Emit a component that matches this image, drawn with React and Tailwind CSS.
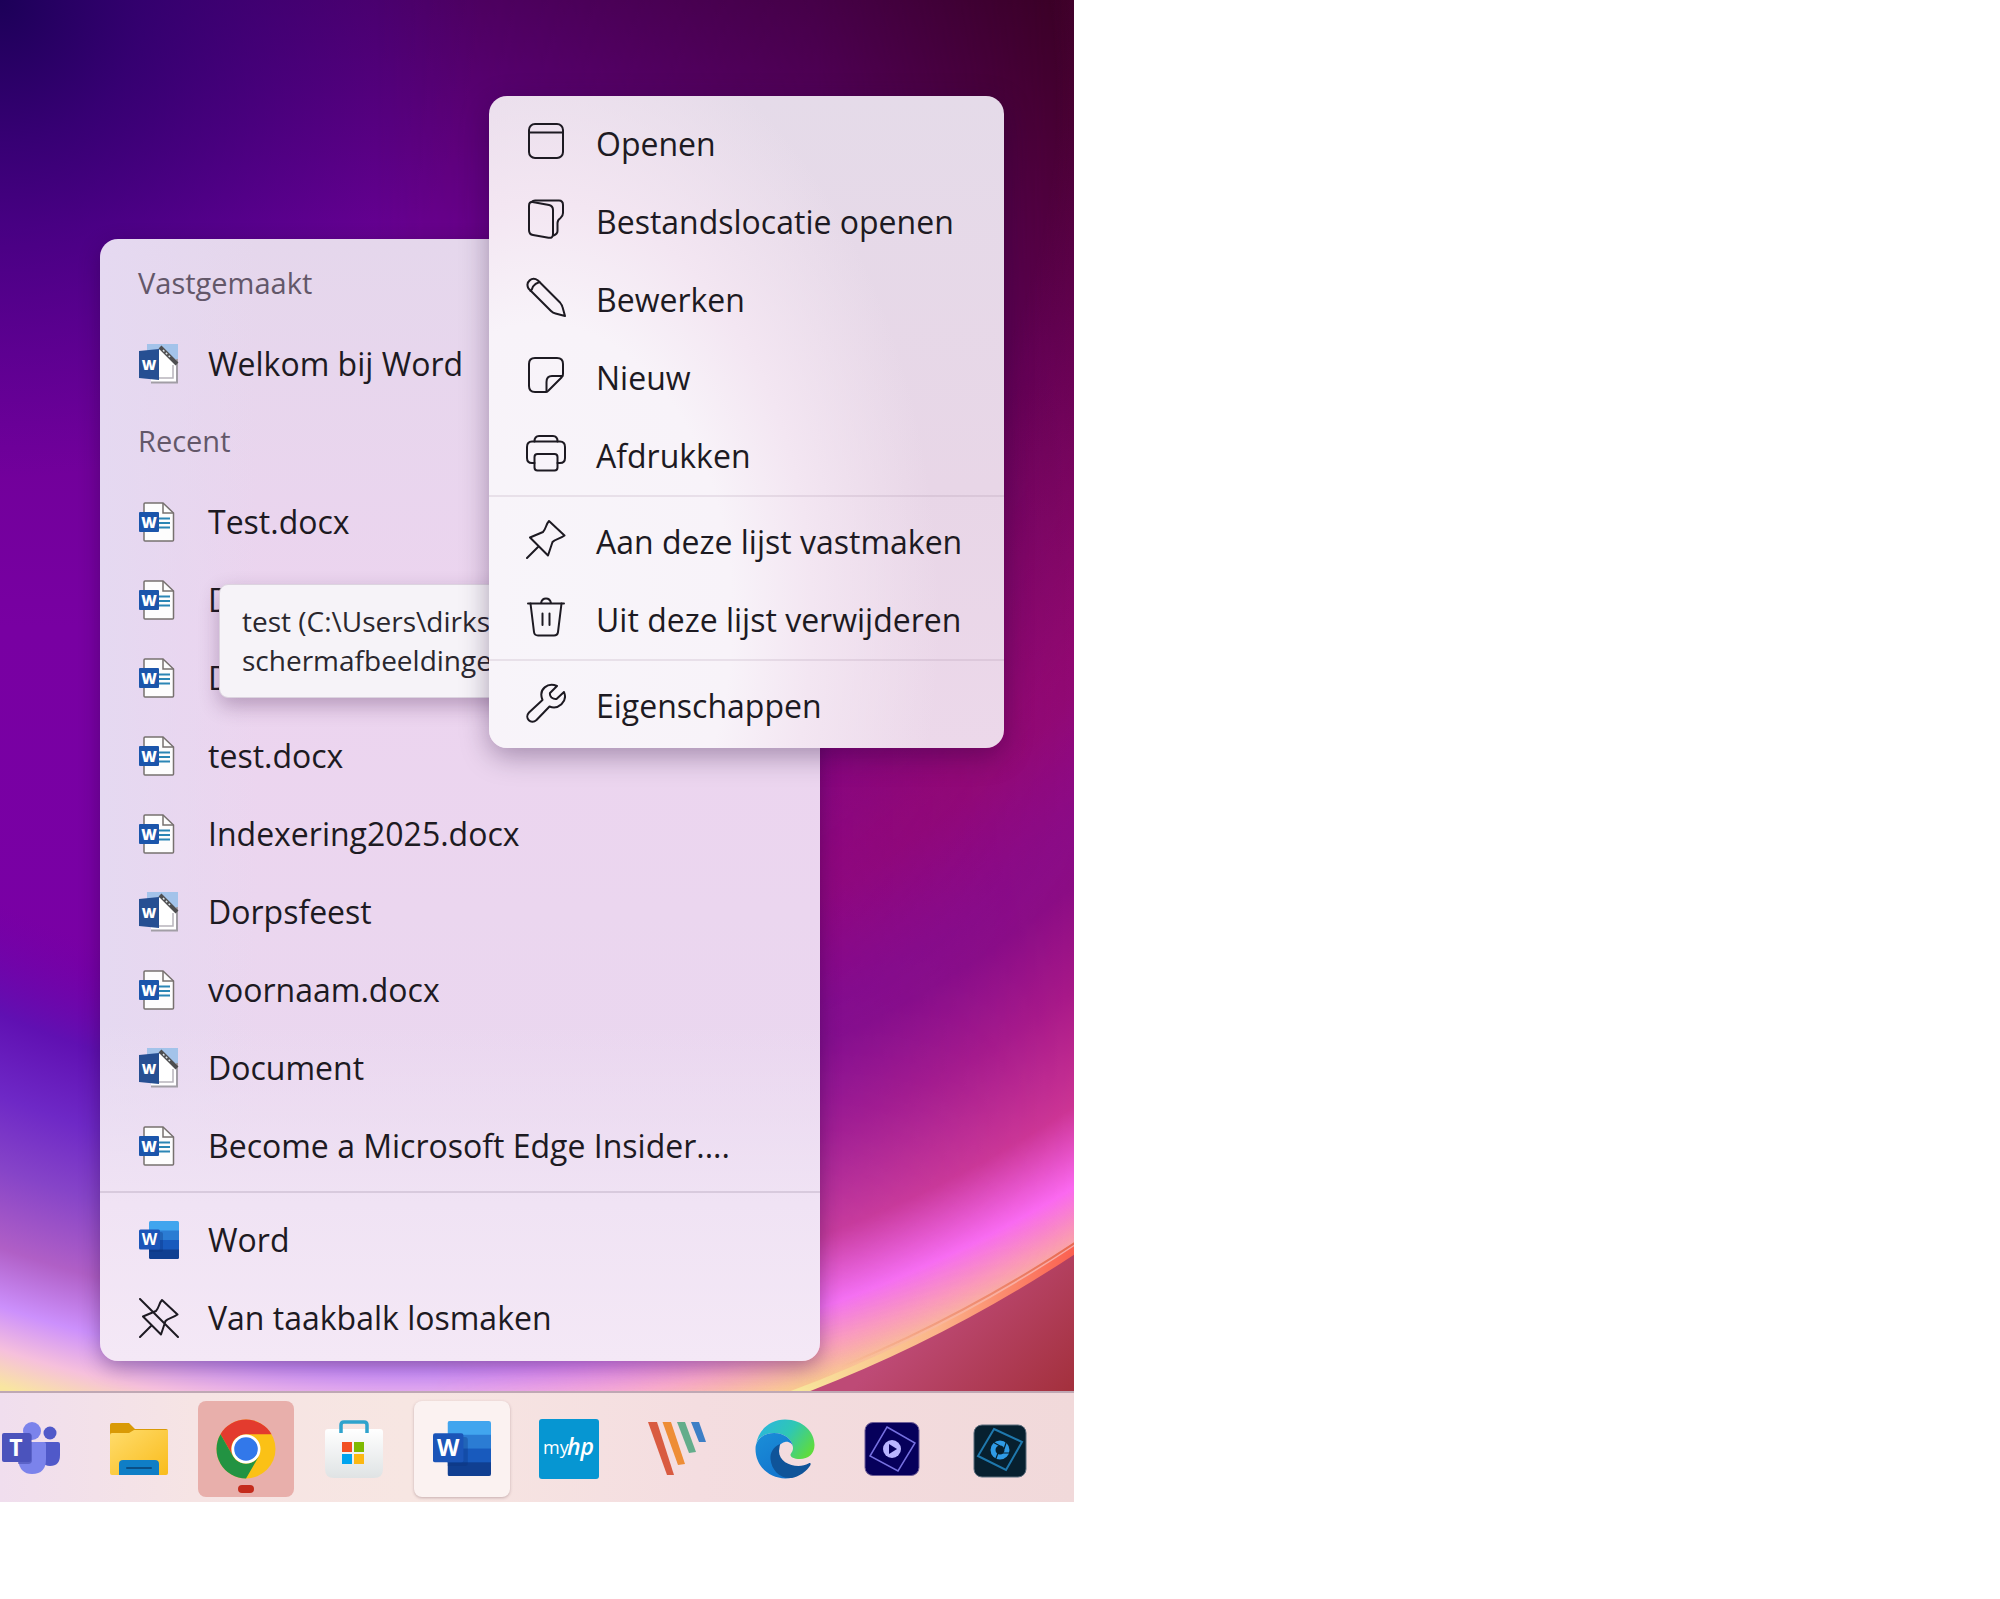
const pinPath = 'M23 2 L38.5 16.5 C34 20 29 20 26.5 23 L22 36.5 L4 18.5 L17 13 C20 10 20 5 23 2 Z M1 39 L12.5 27.5';

const glyphs = {
  window: (
    <>
      <rect x="3" y="3" width="34" height="34" rx="6" />
      <path d="M3 11.5 H37" />
    </>
  ),
  folder: (
    <>
      <path d="M3 7 Q3 2.5 6.5 3 L23 6 Q27 7 27 11 V35 Q27 39.5 22.5 38.7 L7 36 Q3 35.5 3 31 Z" />
      <path d="M5.5 3 Q7 1.5 9 1.5 H33 Q37 1.5 37 6 V14 Q37 17 34.5 19 Q31.5 21 31.5 24 V32 Q31.5 35 27.5 36.5" />
    </>
  ),
  pencil: (
    <>
      <path d="M2.5 11.5 C-1 5 6 -1 12 3.5 L34 25.5 Q36 28 36.5 30 L39 39 L29.5 36.5 Q27 36 25 34 Z" />
      <path d="M4.5 14 Q6 13 7 9.5 Q9 6.5 13.5 5" />
    </>
  ),
  note: (
    <>
      <path d="M20 37 H9 Q3 37 3 31 V9 Q3 3 9 3 H31 Q37 3 37 9 V19 Q37 21 35.5 22.5 L22.5 35.5 Q21.5 37 20 37 Z" />
      <path d="M20.5 36.5 V27 Q20.5 21 26 21 H36.5" />
    </>
  ),
  printer: (
    <>
      <path d="M8.5 30 H6 Q1 30 1 25 V14 Q1 8.5 6 8.5 H34 Q39 8.5 39 14 V25 Q39 30 34 30 H31.5" />
      <path d="M8.5 8.5 Q8.5 3 13 3 H27 Q31.5 3 31.5 8.5" />
      <rect x="8.5" y="21" width="23" height="16.5" rx="3" />
    </>
  ),
  pin: <path d={pinPath} />,
  unpin: <path d={`${pinPath} M1 1 L39 39`} />,
  trash: (
    <>
      <path d="M2 6.5 H38 M15 6 Q16 1.5 20 1.5 Q24 1.5 25 6" />
      <path d="M4.5 6.5 L8 35 Q8.5 38.5 12 38.5 H28 Q31.5 38.5 32 35 L35.5 6.5 M16.5 16.5 V28 M23.5 16.5 V28" />
    </>
  ),
  wrench: (
    <path d="M31 3 C22 -1 12 6 16.5 17 L3 29.5 C-2 35 5 42 10.5 37 L23.5 23.5 C32 27 42 19 38 9 L30.5 16 Q28 16.5 25.5 14.5 Q23.5 12.5 24 10 Z" />
  ),
};

function Glyph({ name }) {
  return (
    <svg viewBox="0 0 40 40" className="size-10 shrink-0" fill="none" stroke="#1d1a22" strokeWidth="2" strokeLinejoin="round" strokeLinecap="round">
      {glyphs[name]}
    </svg>
  );
}

function DocIcon() {
  return (
    <svg viewBox="0 0 40 40" className="size-10 shrink-0">
      <path d="M6 1 H24 L34.5 11 V38 Q34.5 39 33.5 39 H6 Q5 39 5 38 V2 Q5 1 6 1 Z" fill="#fdfdfd" stroke="#77716f" strokeWidth="1.5" />
      <path d="M24 1 V11 H34.5" fill="none" stroke="#77716f" strokeWidth="1.5" />
      <path d="M20 16.5 H31 M20 21 H31 M20 25.5 H31" stroke="#2b86b5" strokeWidth="1.8" />
      <rect x="0" y="10" width="20" height="20" rx="1" fill="#1b55ab" />
      <text x="10" y="25.5" textAnchor="middle" fontSize="15" fontWeight="800" fill="#fff" fontFamily="Open Sans">W</text>
    </svg>
  );
}

function TemplateIcon() {
  return (
    <svg viewBox="0 0 40 40" className="size-10 shrink-0">
      <rect x="8" y="0" width="31" height="18" fill="#a3c3ea" />
      <path d="M12 6 H24 L39 18 V39 H12 Z" fill="#fff" />
      <path d="M38 15 V39 M12 38.5 H39" stroke="#a29ea6" strokeWidth="2" />
      <path d="M34 21 V34 H20" stroke="#b8b4bc" strokeWidth="1.5" fill="none" />
      <path d="M0 7 L20 5 V36 L0 34 Z" fill="#264f92" />
      <path d="M21 3 L38 20" stroke="#4e4e50" strokeWidth="4" />
      <path d="M24 6 L32 14" stroke="#dfe6ea" strokeWidth="1.5" strokeDasharray="2 2" />
      <text x="10" y="25.5" textAnchor="middle" fontSize="14" fontWeight="800" fill="#fff" fontFamily="Open Sans">W</text>
    </svg>
  );
}

function WordIcon({ className }) {
  return (
    <svg viewBox="0 0 40 38" className={className}>
      <clipPath id="word-sheet">
        <rect x="10" y="0" width="30" height="38" rx="1.5" />
      </clipPath>
      <g clipPath="url(#word-sheet)">
        <rect x="10" y="0" width="30" height="10" fill="#41a5ee" />
        <rect x="10" y="9.5" width="30" height="10" fill="#2b7cd3" />
        <rect x="10" y="19" width="30" height="10" fill="#185abd" />
        <rect x="10" y="28.5" width="30" height="10" fill="#103f91" />
      </g>
      <path d="M10 11 H22 Q24 11 24 13 V29 Q24 31 22 31 H10 Z" fill="#0a2f78" opacity="0.3" />
      <rect x="0" y="8.5" width="21" height="20" rx="1.5" fill="#1b55b8" />
      <text x="10.5" y="24" textAnchor="middle" fontSize="16" fontWeight="700" fill="#fff" fontFamily="Open Sans">W</text>
    </svg>
  );
}

function TeamsIcon() {
  return (
    <svg viewBox="0 0 60 54" className="w-15 shrink-0">
      <circle cx="49" cy="11" r="6.5" fill="#5059c9" />
      <path d="M40 20 H57 Q59 20 59 22 V33 Q59 44 49 44 Q44 44 41 40 Z" fill="#5059c9" />
      <circle cx="31" cy="9" r="9" fill="#7b83eb" />
      <path d="M19 20 H43 Q45 20 45 22 V37 Q45 52 31 52 Q19 52 17 38 Z" fill="#7b83eb" />
      <path d="M19 12 H29 Q31 12 31 14 V38 Q31 42 27 42 H17 Z" fill="#3b43a5" opacity="0.5" />
      <rect x="1" y="11" width="29" height="29" rx="2" fill="#4b53bc" />
      <text x="15" y="34" textAnchor="middle" fontSize="23" fontWeight="700" fill="#fff" fontFamily="Open Sans">T</text>
    </svg>
  );
}

function ExplorerIcon() {
  return (
    <svg viewBox="0 0 58 52" className="w-[58px] shrink-0">
      <defs>
        <linearGradient id="folder-front" x1="0" y1="0" x2="1" y2="1">
          <stop offset="0" stopColor="#ffdc6c" />
          <stop offset="1" stopColor="#f9bc1c" />
        </linearGradient>
      </defs>
      <path d="M2 0 H19 L25 6 H56 Q58 6 58 8 V20 H0 V2 Q0 0 2 0 Z" fill="#d99a06" />
      <path d="M0 12 Q0 10 2 10 H19 L24 7 H58 V50 Q58 52 56 52 H2 Q0 52 0 50 Z" fill="url(#folder-front)" />
      <path d="M9 52 V41 Q9 37 13 37 H45 Q49 37 49 41 V52 Z" fill="#0f7ec6" />
      <path d="M17 45 H41" stroke="#0a4f86" strokeWidth="2" strokeLinecap="round" />
    </svg>
  );
}

function ChromeIcon() {
  return (
    <svg viewBox="0 0 60 60" className="size-15 shrink-0">
      <circle cx="30" cy="30" r="29.5" fill="#fbc116" />
      <path d="M4.5 15.2 A29.5 29.5 0 0 1 55.5 15.2 H30 A14.8 14.8 0 0 0 17.2 37.4 Z" fill="#e33b2e" />
      <path d="M4.5 15.2 L17.2 37.4 A14.8 14.8 0 0 0 42.8 37.4 L30 59.5 A29.5 29.5 0 0 1 4.5 15.2 Z" fill="#229342" />
      <circle cx="30" cy="30" r="14.5" fill="#fff" />
      <circle cx="30" cy="30" r="11.8" fill="#3278ea" />
    </svg>
  );
}

function StoreIcon() {
  return (
    <svg viewBox="0 0 58 58" className="size-[58px] shrink-0">
      <defs>
        <linearGradient id="store-bag" x1="0" y1="0" x2="0" y2="1">
          <stop offset="0" stopColor="#fff" />
          <stop offset="1" stopColor="#dfe3e4" />
        </linearGradient>
      </defs>
      <path d="M0 12 Q0 9 3 9 H55 Q58 9 58 12 V49 Q58 58 49 58 H9 Q0 58 0 49 Z" fill="url(#store-bag)" />
      <path d="M16 13 V5 Q16 2 19 2 H39 Q42 2 42 5 V13" fill="none" stroke="#2fa3cd" strokeWidth="3.5" />
      <rect x="17" y="22" width="10" height="10" fill="#f25022" />
      <rect x="29" y="22" width="10" height="10" fill="#7fba00" />
      <rect x="17" y="34" width="10" height="10" fill="#00a4ef" />
      <rect x="29" y="34" width="10" height="10" fill="#fcb813" />
    </svg>
  );
}

function MyHpIcon() {
  return (
    <svg viewBox="0 0 60 60" className="size-15 shrink-0">
      <rect width="60" height="60" rx="3" fill="#0696d2" />
      <text x="4" y="35" fontSize="18" fill="#fff" fontFamily="Open Sans">my</text>
      <text x="28" y="36" fontSize="23" fontStyle="italic" fontWeight="600" fill="#fff" fontFamily="Open Sans">hp</text>
    </svg>
  );
}

function StripesIcon() {
  return (
    <svg viewBox="0 0 58 54" className="w-[58px] shrink-0">
      <path d="M0 0 H9 L26 53 H19 Z" fill="#d95b41" />
      <path d="M14.5 0 H23 L37 42 L30 43 Z" fill="#ee8d36" />
      <path d="M29 0 H37 L48 30 L41 31 Z" fill="#64ad8b" />
      <path d="M43 0 H51 L58 20 H51 Z" fill="#3d7fc6" />
    </svg>
  );
}

function EdgeIcon() {
  return (
    <svg viewBox="0 0 60 60" className="size-15 shrink-0">
      <defs>
        <linearGradient id="edge-top" x1="0" y1="0.2" x2="1" y2="0.7">
          <stop offset="0" stopColor="#2bb5e0" />
          <stop offset="0.5" stopColor="#2fc7b4" />
          <stop offset="1" stopColor="#5fdc3c" />
        </linearGradient>
        <linearGradient id="edge-left" x1="0" y1="0" x2="0.6" y2="1">
          <stop offset="0" stopColor="#1b8fd8" />
          <stop offset="1" stopColor="#1274cd" />
        </linearGradient>
      </defs>
      <path d="M1 26 C3 11 15 0.5 30 0.5 C48 0.5 59.5 13 59.5 26 C59.5 35 53 40 45 40 C39 40 35.5 38 35.5 36 C35.5 34 38 33 38 29 C38 21 30 14 19 14 C9 14 2 20 1 26 Z" fill="url(#edge-top)" />
      <path d="M0.5 30 C0.5 21 8 14 19 14 C30 14 38 21 38 29 C38 24 33 22 30 23 C25 24 22 29 22 34 C22 46 32 52 40 52 C44 52 40 57 38 58.5 C19 63 0.5 50 0.5 30 Z" fill="url(#edge-left)" />
      <path d="M25 25 C18 28 15 34 15.5 40 C16.5 51 25 60 36 59 C44 58 52 52 55.5 46 C56 44 55 43.5 53.5 44.5 C44 50 24 46 24 32 Z" fill="#0f5499" />
    </svg>
  );
}

function PremiereIcon() {
  return (
    <svg viewBox="0 0 56 54" className="w-14 shrink-0">
      <rect x="1" y="0.5" width="54" height="53" rx="8" fill="#06005b" stroke="#6f5f98" />
      <path d="M23 5 L51 21 L34 49 L6 34 Z" fill="none" stroke="#7670e0" strokeWidth="1.5" />
      <circle cx="28" cy="27" r="9" fill="#b9b5ff" />
      <path d="M25 22 L33 27 L25 32 Z" fill="#06005b" />
    </svg>
  );
}

function PhotoshopIcon() {
  return (
    <svg viewBox="0 0 54 54" className="mt-1 w-[54px] shrink-0">
      <rect x="1" y="1" width="52" height="52" rx="8" fill="#07202f" stroke="#5a6c7c" />
      <path d="M21 5 L49 18 L33 46 L5 32 Z" fill="none" stroke="#1f78ad" strokeWidth="2" />
      <circle cx="27" cy="26" r="7" fill="none" stroke="#2f9be6" strokeWidth="5" />
      <path d="M27 22 L18 17 M31 25 L34 16 M29 29 L38 29 M25 29 L22 37" stroke="#07202f" strokeWidth="1.2" />
    </svg>
  );
}

const recent = [
  { name: 'Test.docx', Icon: DocIcon },
  { name: 'D', Icon: DocIcon },
  { name: 'D', Icon: DocIcon },
  { name: 'test.docx', Icon: DocIcon },
  { name: 'Indexering2025.docx', Icon: DocIcon },
  { name: 'Dorpsfeest', Icon: TemplateIcon },
  { name: 'voornaam.docx', Icon: DocIcon },
  { name: 'Document', Icon: TemplateIcon },
  { name: 'Become a Microsoft Edge Insider....', Icon: DocIcon },
];

const menuGroups = [
  [
    { label: 'Openen', icon: 'window' },
    { label: 'Bestandslocatie openen', icon: 'folder' },
    { label: 'Bewerken', icon: 'pencil' },
    { label: 'Nieuw', icon: 'note' },
    { label: 'Afdrukken', icon: 'printer' },
  ],
  [
    { label: 'Aan deze lijst vastmaken', icon: 'pin' },
    { label: 'Uit deze lijst verwijderen', icon: 'trash' },
  ],
  [{ label: 'Eigenschappen', icon: 'wrench' }],
];

function Wallpaper() {
  return (
    <svg viewBox="0 0 1074 1392" preserveAspectRatio="none" className="absolute inset-0 size-full" aria-hidden="true">
      <defs>
        <linearGradient id="wp-base" x1="0" y1="0" x2="0" y2="1">
          <stop offset="0" stopColor="#500068" />
          <stop offset="0.16" stopColor="#680090" />
          <stop offset="0.45" stopColor="#7800a2" />
          <stop offset="1" stopColor="#7a00a8" />
        </linearGradient>
        <radialGradient id="wp-blue" gradientUnits="userSpaceOnUse" cx="0" cy="0" r="480">
          <stop offset="0" stopColor="#1c0058" />
          <stop offset="0.3" stopColor="#2a0070" stopOpacity="0.75" />
          <stop offset="1" stopColor="#3a0090" stopOpacity="0" />
        </radialGradient>
        <linearGradient id="wp-side" x1="0" y1="0" x2="0" y2="1">
          <stop offset="0" stopColor="#3a0024" />
          <stop offset="0.25" stopColor="#5c0048" />
          <stop offset="0.55" stopColor="#880c5c" />
          <stop offset="1" stopColor="#900c78" />
        </linearGradient>
        <linearGradient id="wp-fade" x1="0" y1="0" x2="1" y2="0">
          <stop offset="0.35" stopColor="#000" />
          <stop offset="0.76" stopColor="#777" />
          <stop offset="1" stopColor="#fff" />
        </linearGradient>
        <linearGradient id="wp-fade-glow" x1="0" y1="0" x2="1" y2="0">
          <stop offset="0.4" stopColor="#000" />
          <stop offset="0.76" stopColor="#ccc" />
          <stop offset="1" stopColor="#fff" />
        </linearGradient>
        <mask id="wp-right">
          <rect width="1074" height="1392" fill="url(#wp-fade)" />
        </mask>
        <mask id="wp-right-glow">
          <rect width="1074" height="1392" fill="url(#wp-fade-glow)" />
        </mask>
        <radialGradient id="wp-glow" gradientUnits="userSpaceOnUse" cx="403" cy="100" r="1360">
          <stop offset="0.66" stopColor="#7000a8" stopOpacity="0" />
          <stop offset="0.735" stopColor="#6010b2" />
          <stop offset="0.79" stopColor="#6e28c6" />
          <stop offset="0.84" stopColor="#8644c8" />
          <stop offset="0.895" stopColor="#b05fc6" />
          <stop offset="0.936" stopColor="#cc90fc" />
          <stop offset="0.966" stopColor="#f6c0dc" />
          <stop offset="0.992" stopColor="#f9e6a0" />
        </radialGradient>
        <radialGradient id="wp-glow-right" gradientUnits="userSpaceOnUse" cx="403" cy="100" r="1360">
          <stop offset="0.48" stopColor="#920880" stopOpacity="0" />
          <stop offset="0.64" stopColor="#98087c" stopOpacity="0.7" />
          <stop offset="0.76" stopColor="#8c0c84" />
          <stop offset="0.82" stopColor="#a81888" />
          <stop offset="0.89" stopColor="#cc3494" />
          <stop offset="0.94" stopColor="#fb68f0" />
          <stop offset="0.966" stopColor="#fb88b0" stopOpacity="0.8" />
          <stop offset="0.99" stopColor="#fa9a78" stopOpacity="0.5" />
        </radialGradient>
        <linearGradient id="wp-outer" gradientUnits="userSpaceOnUse" x1="960" y1="1280" x2="1074" y2="1392">
          <stop offset="0" stopColor="#be4a76" />
          <stop offset="1" stopColor="#a3303c" />
        </linearGradient>
        <linearGradient id="wp-rim" gradientUnits="userSpaceOnUse" x1="800" y1="0" x2="1074" y2="0">
          <stop offset="0" stopColor="#f8e69c" />
          <stop offset="0.5" stopColor="#fbb48a" />
          <stop offset="1" stopColor="#fb6050" />
        </linearGradient>
        <linearGradient id="wp-rim-line" gradientUnits="userSpaceOnUse" x1="840" y1="0" x2="1074" y2="0">
          <stop offset="0" stopColor="#e0702c" stopOpacity="0" />
          <stop offset="1" stopColor="#e0502c" stopOpacity="0.7" />
        </linearGradient>
      </defs>
      <rect width="1074" height="1392" fill="url(#wp-base)" />
      <rect width="1074" height="1392" fill="url(#wp-blue)" />
      <rect width="1074" height="1392" fill="url(#wp-side)" mask="url(#wp-right)" />
      <rect width="1074" height="1392" fill="url(#wp-glow)" />
      <rect width="1074" height="1392" fill="url(#wp-glow-right)" mask="url(#wp-right-glow)" />
      <path d="M806 1392 A1383 1383 0 0 0 1074 1253 V1392 Z" fill="url(#wp-outer)" />
      <path d="M790 1396 A1383 1383 0 0 0 1076 1250" fill="none" stroke="url(#wp-rim)" strokeWidth="7" />
      <path d="M790 1388 A1383 1383 0 0 0 1076 1243" fill="none" stroke="url(#wp-rim-line)" strokeWidth="2" />
    </svg>
  );
}

function ListRow({ icon, children }) {
  return (
    <li>
      <button className="flex h-[78px] w-full items-center gap-[29px] pl-[39px] text-left">
        {icon}
        <span className="whitespace-nowrap">{children}</span>
      </button>
    </li>
  );
}

function ListHeading({ children }) {
  return <h2 className="flex h-20 items-center pb-1 pl-[38px] text-[29px] text-[#635769]">{children}</h2>;
}

function JumpList() {
  return (
    <section className="relative w-[720px] rounded-[18px] bg-[linear-gradient(0deg,#f4e8f6_0%,#f0e3f4_14%,transparent_30%),linear-gradient(90deg,#e5d9f1_0%,transparent_22%),linear-gradient(180deg,#e5d7ec_0%,#ecd4ef_35%,#ebd6ef_60%,#e8d8f0_100%)] pt-1.5 pb-1 shadow-[0_6px_20px_rgba(30,0,50,0.35)]">
      <ListHeading>Vastgemaakt</ListHeading>
      <ul>
        <ListRow icon={<TemplateIcon />}>Welkom bij Word</ListRow>
      </ul>
      <ListHeading>Recent</ListHeading>
      <ul>
        {recent.map(({ name, Icon }, i) => (
          <ListRow key={i} icon={<Icon />}>{name}</ListRow>
        ))}
      </ul>
      <hr className="mt-1.5 mb-2 border-t-2 border-[#d8cadd]" />
      <ul>
        <ListRow icon={<WordIcon className="w-10 shrink-0" />}>Word</ListRow>
        <ListRow icon={<Glyph name="unpin" />}>Van taakbalk losmaken</ListRow>
      </ul>

      {/* Tooltip over the covered rows */}
      <div role="tooltip" className="absolute top-[345px] left-[119px] w-[320px] rounded-[9px] border border-[#dcd3df] bg-[#f6f3f8] px-[22px] py-[17px] text-[28px] leading-[39px] whitespace-nowrap text-[#2a272e] shadow-[0_8px_20px_rgba(60,20,70,0.3)]">
        test (C:\Users\dirks<br />schermafbeeldinge
      </div>
    </section>
  );
}

function ContextMenu() {
  return (
    <div className="absolute top-24 left-[489px] w-[515px] divide-y-2 divide-[#8a7090]/15 rounded-[18px] bg-[radial-gradient(ellipse_62%_75%_at_10%_80%,#f8f5fa_0%,#f8f3f9_60%,#f3e6f2_85%,transparent_125%),linear-gradient(180deg,#e5dbe9_0%,#e8d6e7_60%,#ecd8ea_100%)] py-[3px] shadow-[0_8px_28px_rgba(30,0,50,0.35)]">
      {menuGroups.map((group, i) => (
        <ul key={i} className="pt-1.5">
          {group.map(({ label, icon }) => (
            <li key={label}>
              <button className="flex h-[78px] w-full items-center gap-[30px] pl-[37px] text-left">
                <span className="mb-1.5"><Glyph name={icon} /></span>
                <span className="whitespace-nowrap">{label}</span>
              </button>
            </li>
          ))}
        </ul>
      ))}
    </div>
  );
}

const tileClass = 'relative flex h-24 w-24 shrink-0 items-center justify-center rounded-lg';

function Taskbar() {
  return (
    <nav className="relative overflow-hidden border-t-2 border-[#bfa8b4] bg-[linear-gradient(90deg,#f0deee_0%,#f6e4e4_18%,#f7e6e2_38%,#f4dde0_65%,#f1d9da_100%)]">
      <div className="-ml-[17px] flex justify-between pt-2 pr-[26px] pb-[5px]">
        <button aria-label="Teams" className={tileClass}><TeamsIcon /></button>
        <button aria-label="Verkenner" className={tileClass}><ExplorerIcon /></button>
        <button aria-label="Chrome" className={`${tileClass} bg-[#e8afab]`}>
          <ChromeIcon />
          <span className="absolute bottom-1 h-2 w-4 rounded-full bg-[#c42b1c]" />
        </button>
        <button aria-label="Store" className={tileClass}><StoreIcon /></button>
        <button aria-label="Word" className={`${tileClass} bg-[#fbf2f1] shadow-[0_1px_3px_rgba(90,50,60,0.3)]`}>
          <WordIcon className="w-[58px] shrink-0" />
        </button>
        <button aria-label="myHP" className={tileClass}><MyHpIcon /></button>
        <button aria-label="Strepen" className={tileClass}><StripesIcon /></button>
        <button aria-label="Edge" className={tileClass}><EdgeIcon /></button>
        <button aria-label="Premiere Elements" className={tileClass}><PremiereIcon /></button>
        <button aria-label="Photoshop Elements" className={tileClass}><PhotoshopIcon /></button>
      </div>
    </nav>
  );
}

export default function App() {
  return (
    <div className="min-h-screen bg-white font-['Open_Sans',sans-serif] text-[32px] text-[#1d1a22]">
      <div className="relative w-full max-w-[1074px] overflow-hidden">
        <main className="relative pt-[239px] pb-[30px] pl-[100px]">
          <Wallpaper />
          <JumpList />
          <ContextMenu />
        </main>
        <Taskbar />
      </div>
    </div>
  );
}
